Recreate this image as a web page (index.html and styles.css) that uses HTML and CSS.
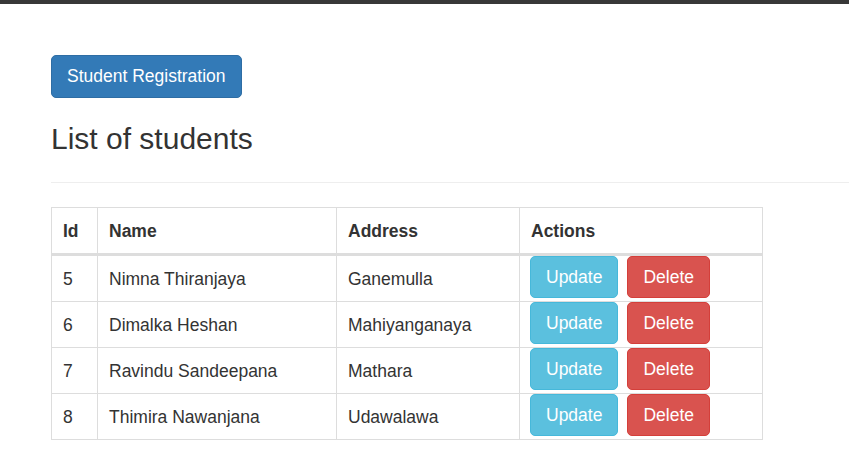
FILE: index.html
```html
<!DOCTYPE html>
<html lang="en">
<head>
<meta charset="utf-8">
<title>List of students</title>
<link rel="stylesheet" href="styles.css">
</head>
<body>
<div class="topbar"></div>
<div class="container">
  <button class="btn btn-primary btn-register" type="button">Student Registration</button>
  <h3 class="title">List of students</h3>
  <hr class="divider">
  <table class="students">
    <colgroup>
      <col class="c-id">
      <col class="c-name">
      <col class="c-address">
      <col class="c-actions">
    </colgroup>
    <thead>
      <tr><th>Id</th><th>Name</th><th>Address</th><th>Actions</th></tr>
    </thead>
    <tbody>
      <tr><td>5</td><td>Nimna Thiranjaya</td><td>Ganemulla</td><td class="actions"><button class="btn btn-info" type="button">Update</button><button class="btn btn-danger" type="button">Delete</button></td></tr>
      <tr><td>6</td><td>Dimalka Heshan</td><td>Mahiyanganaya</td><td class="actions"><button class="btn btn-info" type="button">Update</button><button class="btn btn-danger" type="button">Delete</button></td></tr>
      <tr><td>7</td><td>Ravindu Sandeepana</td><td>Mathara</td><td class="actions"><button class="btn btn-info" type="button">Update</button><button class="btn btn-danger" type="button">Delete</button></td></tr>
      <tr><td>8</td><td>Thimira Nawanjana</td><td>Udawalawa</td><td class="actions"><button class="btn btn-info" type="button">Update</button><button class="btn btn-danger" type="button">Delete</button></td></tr>
    </tbody>
  </table>
</div>
</body>
</html>
```

FILE: styles.css
```css
html, body {
  margin: 0;
  padding: 0;
  background: #fff;
}
body {
  font-family: "Liberation Sans", Arial, Helvetica, sans-serif;
  font-size: 17.5px;
  color: #333;
  overflow: hidden;
}
.topbar {
  height: 4px;
  background: #383838;
}
.container {
  padding-left: 51px;
}
.btn {
  display: inline-block;
  box-sizing: border-box;
  height: 43px;
  padding: 0 15px;
  font-family: inherit;
  font-size: 17.5px;
  line-height: 41px;
  color: #fff;
  border: 1px solid transparent;
  border-radius: 5px;
  cursor: pointer;
}
.btn-primary {
  background: #337ab7;
  border-color: #2e6da4;
}
.btn-info {
  background: #5bc0de;
  border-color: #46b8da;
  height: 42px;
  line-height: 40px;
}
.btn-danger {
  background: #d9534f;
  border-color: #d43f3a;
  height: 42px;
  line-height: 40px;
}
.btn-register {
  margin-top: 51px;
}
.title {
  margin: 24px 0 0;
  font-size: 30px;
  font-weight: 500;
  line-height: 33px;
}
.divider {
  margin: 27px 0 0;
  border: 0;
  border-top: 1px solid #eee;
  height: 0;
}
.students {
  margin-top: 24px;
  border-collapse: collapse;
  table-layout: fixed;
  width: 711px;
}
.c-id { width: 46px; }
.c-name { width: 239px; }
.c-address { width: 183px; }
.c-actions { width: 243px; }
.students th,
.students td {
  border: 1px solid #ddd;
  padding: 0 11px;
  text-align: left;
  height: 45px;
  line-height: 25px;
  box-sizing: border-box;
}
.students th {
  font-weight: bold;
  height: 47px;
  padding-top: 1px;
  border-bottom: 3px solid #ddd;
  vertical-align: middle;
}
.students td {
  vertical-align: middle;
  padding-top: 2px;
}
.students td.actions {
  padding: 0 10px 3px;
  vertical-align: top;
}
.actions .btn + .btn {
  margin-left: 9px;
}
.actions .btn {
  vertical-align: top;
}
```
